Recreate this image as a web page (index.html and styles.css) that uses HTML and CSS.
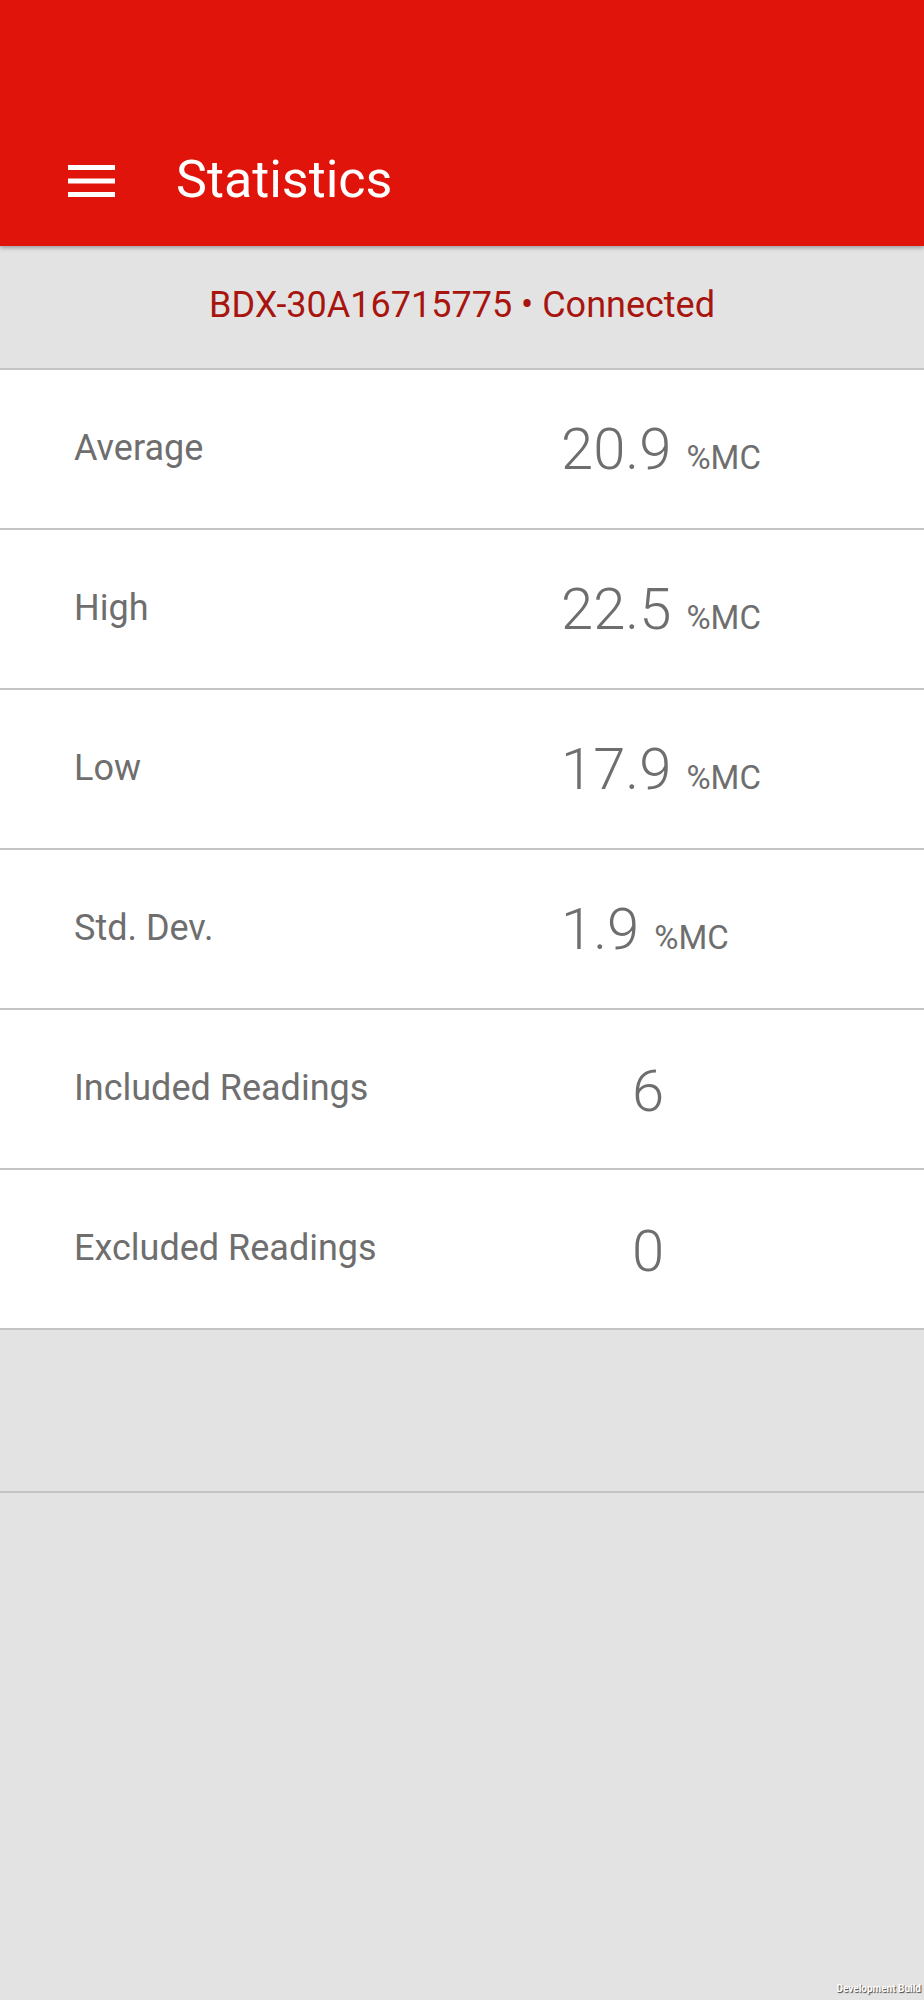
FILE: index.html
```html
<!DOCTYPE html>
<html lang="en">
<head>
    <meta charset="UTF-8">
    <meta name="viewport" content="width=device-width, initial-scale=1.0">
    <title>Statistics</title>
    <link rel="stylesheet" href="styles.css">
</head>
<body>

    <header class="appbar">
        <div class="toolbar">
            <button class="menu-btn" aria-label="Menu">
                <svg width="47" height="32" viewBox="0 0 47 32">
                    <rect x="0" y="0" width="47" height="5"></rect>
                    <rect x="0" y="13.5" width="47" height="5"></rect>
                    <rect x="0" y="27" width="47" height="5"></rect>
                </svg>
            </button>
            <h1 class="title">Statistics</h1>
        </div>
    </header>

    <div class="device-bar">BDX-30A16715775 • Connected</div>

    <ul class="stats">
        <li class="stat">
            <span class="label">Average</span>
            <span class="value"><span class="num">20.9</span><span class="unit">%MC</span></span>
        </li>
        <li class="stat">
            <span class="label">High</span>
            <span class="value"><span class="num">22.5</span><span class="unit">%MC</span></span>
        </li>
        <li class="stat">
            <span class="label">Low</span>
            <span class="value"><span class="num">17.9</span><span class="unit">%MC</span></span>
        </li>
        <li class="stat">
            <span class="label">Std. Dev.</span>
            <span class="value"><span class="num">1.9</span><span class="unit">%MC</span></span>
        </li>
        <li class="stat">
            <span class="label">Included Readings</span>
            <span class="value count"><span class="num">6</span></span>
        </li>
        <li class="stat">
            <span class="label">Excluded Readings</span>
            <span class="value count"><span class="num">0</span></span>
        </li>
    </ul>

    <!-- 리스트 하단 빈 영역 -->
    <div class="list-footer"></div>

    <div class="dev-badge">Development Build</div>

</body>
</html>
```

FILE: styles.css
```css
* {
    margin: 0;
    padding: 0;
    box-sizing: border-box;
}

body {
    width: 924px;
    min-height: 2000px;
    background-color: #e3e3e3;
    font-family: Roboto, "Noto Sans", "Liberation Sans", sans-serif;
    position: relative;
}

/* 상단 빨간 헤더 */
.appbar {
    position: relative;
    z-index: 2;
    height: 246px;
    padding-top: 116px;
    background-color: #e0140a;
    box-shadow: 0 2px 4px rgba(0, 0, 0, 0.3);
}

.toolbar {
    height: 130px;
    display: flex;
    align-items: center;
    padding-left: 68px;
}

.menu-btn {
    display: flex;
    width: 47px;
    height: 32px;
    border: none;
    background: none;
    margin-top: -1px;
}

.menu-btn svg rect {
    fill: #ffffff;
}

.title {
    margin-left: 61px;
    color: #ffffff;
    font-size: 52px;
    font-weight: 400;
    line-height: 1;
    margin-top: -2px;
}

/* 연결 상태 표시줄 */
.device-bar {
    height: 124px;
    display: flex;
    justify-content: center;
    align-items: center;
    padding-bottom: 4px;
    color: #a8150f;
    font-size: 36px;
    border-bottom: 2px solid #c4c4c4;
}

/* 통계 목록 */
.stats {
    list-style: none;
    background-color: #ffffff;
}

.stat {
    height: 160px;
    display: flex;
    align-items: center;
    padding-left: 74px;
    border-bottom: 2px solid #c4c4c4;
    color: #6e6e6e;
}

.label {
    width: 487px;
    font-size: 36px;
    margin-top: -2px;
}

.value {
    display: flex;
    align-items: baseline;
    margin-top: -1px;
}

.value .num {
    font-size: 58px;
    font-weight: 300;
}

.value .unit {
    font-size: 33px;
    margin-left: 15px;
}

.value.count {
    width: 174px;
    justify-content: center;
    margin-top: 4px;
}

.list-footer {
    height: 163px;
    border-bottom: 2px solid #c4c4c4;
}

/* 개발 빌드 표시 */
.dev-badge {
    position: absolute;
    right: 3px;
    bottom: 6px;
    color: #ffffff;
    font-size: 10px;
    font-weight: 700;
    text-shadow: 1px 1px 1px rgba(0, 0, 0, 0.7);
}
```
